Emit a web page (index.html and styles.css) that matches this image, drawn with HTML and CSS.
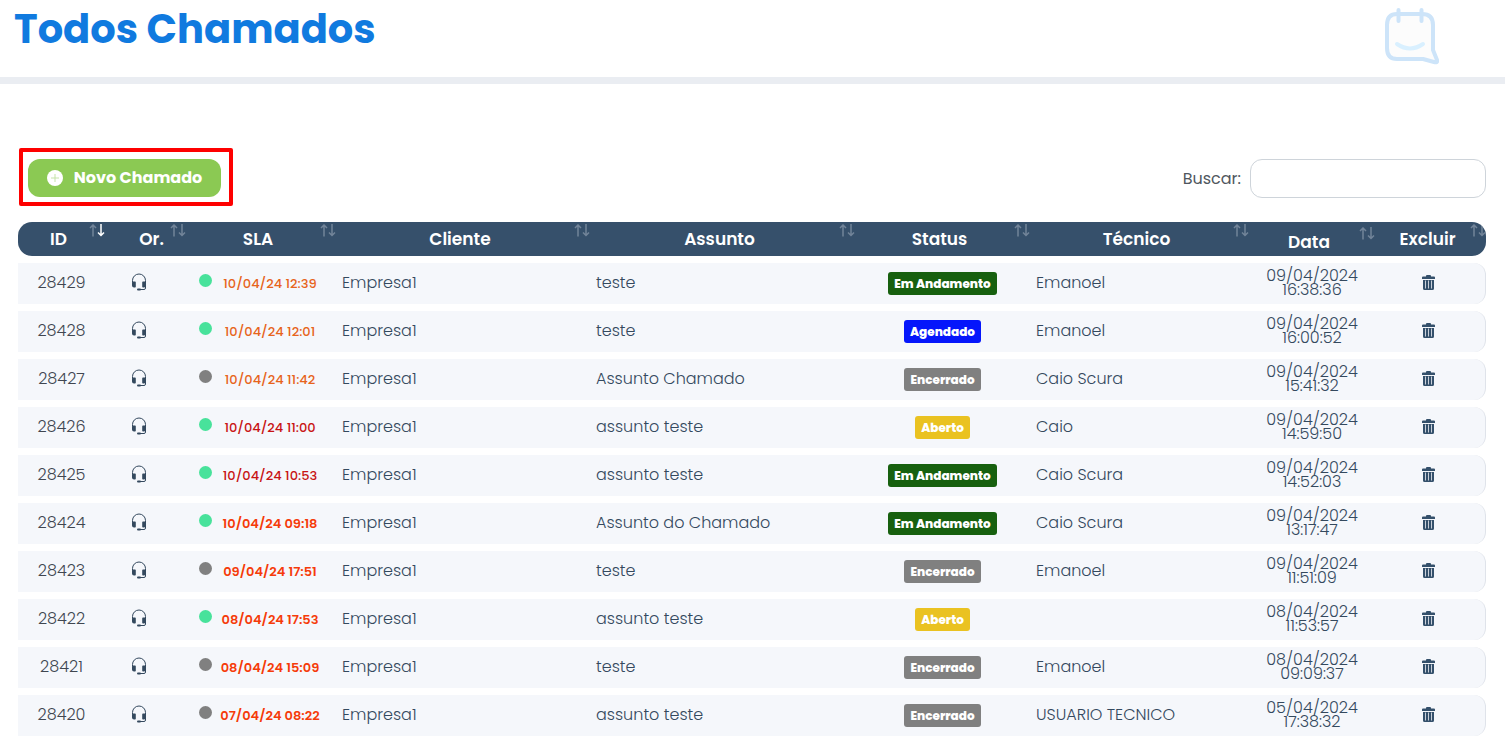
FILE: index.html
```html
<!DOCTYPE html>
<html lang="pt-BR">
<head>
<meta charset="utf-8">
<meta name="viewport" content="width=device-width, initial-scale=1">
<title>Todos Chamados</title>
<link rel="stylesheet" href="styles.css">
</head>
<body>
<svg class="sprite" aria-hidden="true">
  <symbol id="sort" viewBox="0 0 16 13">
    <g fill="none" stroke-width="1.500">
      <path class="up" d="M4 12.500V1M1 4L4 1L7 4"/>
      <path class="down" d="M12 0V11.500M9 8.500L12 11.500L15 8.500"/>
    </g>
  </symbol>
  <symbol id="headset" viewBox="0 0 16 18">
    <path d="M1.500 9V7.500a6.500 6.500 0 0 1 13 0V15q0 1.500-1.500 1.500H9" fill="none" stroke="currentColor"/>
    <path d="M1 9.500q0-.8 1-.9l2-.2q.8 0 .8.800v4.600q0 .8-.8.800l-1-.1Q1 14.300 1 12.500zM15 9.500q0-.8-1-.9l-2-.2q-.8 0-.8.800v4.600q0 .8.800.800l1-.1q2-.2 2-2z" fill="currentColor"/>
    <rect x="6" y="15.500" width="4" height="2" rx="1" fill="currentColor"/>
  </symbol>
  <symbol id="trash" viewBox="0 0 13 15">
    <path d="M4 1.500V1q0-1 1-1h3q1 0 1 1v.5h3q1 0 1 1V4H0V2.500q0-1 1-1zM1 5h11v8.500q0 1.500-1.500 1.500h-8Q1 15 1 13.500z" fill="currentColor"/>
    <path d="M3.500 5.500v8M6.500 5.500v8M9.500 5.500v8" stroke="#c9d0da"/>
  </symbol>
</svg>

<header class="page-header">
  <h1 class="page-title">Todos Chamados</h1>
  <svg class="brand" viewBox="0 0 54 57" role="img" aria-label="Agenda">
    <path d="M12 6H37Q48 6 48 17V42L52 52Q53 55 49 54L38 51H12Q2 51 2 40V17Q2 6 12 6Z" fill="#fcfcfc" stroke="#cde4f9" stroke-width="4" stroke-linejoin="round"/>
    <path d="M13.500 2V13M36.500 2V13" stroke="#cde4f9" stroke-width="4" stroke-linecap="round"/>
    <path d="M12 36Q25 45 38 36" fill="none" stroke="#d9f0ff" stroke-width="4" stroke-linecap="round"/>
  </svg>
</header>

<main class="content">
  <div class="toolbar">
    <div class="highlight">
      <button type="button" class="new-ticket">
        <svg class="plus" viewBox="0 0 16 16" aria-hidden="true"><circle cx="8" cy="8" r="8" fill="#fff"/><path d="M8 4v8M4 8h8" stroke="#c5e3a9"/></svg>
        Novo Chamado
      </button>
    </div>
    <div class="search">
      <label for="search">Buscar:</label>
      <input id="search" type="search" class="search-input">
    </div>
  </div>

  <table class="tickets">
    <colgroup>
      <col class="c-id"><col class="c-origin"><col class="c-sla"><col class="c-client"><col class="c-subject"><col class="c-status"><col class="c-tech"><col class="c-date"><col class="c-delete">
    </colgroup>
    <thead>
      <tr>
        <th class="sorted">ID<svg class="sort"><use href="#sort"/></svg></th>
        <th class="origin-head">Or.<svg class="sort"><use href="#sort"/></svg></th>
        <th>SLA<svg class="sort"><use href="#sort"/></svg></th>
        <th>Cliente<svg class="sort"><use href="#sort"/></svg></th>
        <th>Assunto<svg class="sort"><use href="#sort"/></svg></th>
        <th>Status<svg class="sort"><use href="#sort"/></svg></th>
        <th>Técnico<svg class="sort"><use href="#sort"/></svg></th>
        <th class="date-head">Data<svg class="sort"><use href="#sort"/></svg></th>
        <th>Excluir<svg class="sort"><use href="#sort"/></svg></th>
      </tr>
    </thead>
    <tbody>
      <tr>
        <td class="id">28429</td>
        <td class="origin"><svg class="headset"><use href="#headset"/></svg></td>
        <td><div class="sla"><span class="dot open"></span><span class="due ok">10/04/24 12:39</span></div></td>
        <td>Empresa1</td><td>teste</td>
        <td class="status"><span class="badge progress">Em Andamento</span></td>
        <td>Emanoel</td>
        <td class="date">09/04/2024 16:38:36</td>
        <td class="delete"><button type="button" class="remove" aria-label="Excluir 28429"><svg class="trash"><use href="#trash"/></svg></button></td>
      </tr>
      <tr>
        <td class="id">28428</td>
        <td class="origin"><svg class="headset"><use href="#headset"/></svg></td>
        <td><div class="sla"><span class="dot open"></span><span class="due ok">10/04/24 12:01</span></div></td>
        <td>Empresa1</td><td>teste</td>
        <td class="status"><span class="badge scheduled">Agendado</span></td>
        <td>Emanoel</td>
        <td class="date">09/04/2024 16:00:52</td>
        <td class="delete"><button type="button" class="remove" aria-label="Excluir 28428"><svg class="trash"><use href="#trash"/></svg></button></td>
      </tr>
      <tr>
        <td class="id">28427</td>
        <td class="origin"><svg class="headset"><use href="#headset"/></svg></td>
        <td><div class="sla"><span class="dot"></span><span class="due ok">10/04/24 11:42</span></div></td>
        <td>Empresa1</td><td>Assunto Chamado</td>
        <td class="status"><span class="badge closed">Encerrado</span></td>
        <td>Caio Scura</td>
        <td class="date">09/04/2024 15:41:32</td>
        <td class="delete"><button type="button" class="remove" aria-label="Excluir 28427"><svg class="trash"><use href="#trash"/></svg></button></td>
      </tr>
      <tr>
        <td class="id">28426</td>
        <td class="origin"><svg class="headset"><use href="#headset"/></svg></td>
        <td><div class="sla"><span class="dot open"></span><span class="due near">10/04/24 11:00</span></div></td>
        <td>Empresa1</td><td>assunto teste</td>
        <td class="status"><span class="badge pending">Aberto</span></td>
        <td>Caio</td>
        <td class="date">09/04/2024 14:59:50</td>
        <td class="delete"><button type="button" class="remove" aria-label="Excluir 28426"><svg class="trash"><use href="#trash"/></svg></button></td>
      </tr>
      <tr>
        <td class="id">28425</td>
        <td class="origin"><svg class="headset"><use href="#headset"/></svg></td>
        <td><div class="sla"><span class="dot open"></span><span class="due near">10/04/24 10:53</span></div></td>
        <td>Empresa1</td><td>assunto teste</td>
        <td class="status"><span class="badge progress">Em Andamento</span></td>
        <td>Caio Scura</td>
        <td class="date">09/04/2024 14:52:03</td>
        <td class="delete"><button type="button" class="remove" aria-label="Excluir 28425"><svg class="trash"><use href="#trash"/></svg></button></td>
      </tr>
      <tr>
        <td class="id">28424</td>
        <td class="origin"><svg class="headset"><use href="#headset"/></svg></td>
        <td><div class="sla"><span class="dot open"></span><span class="due late">10/04/24 09:18</span></div></td>
        <td>Empresa1</td><td>Assunto do Chamado</td>
        <td class="status"><span class="badge progress">Em Andamento</span></td>
        <td>Caio Scura</td>
        <td class="date">09/04/2024 13:17:47</td>
        <td class="delete"><button type="button" class="remove" aria-label="Excluir 28424"><svg class="trash"><use href="#trash"/></svg></button></td>
      </tr>
      <tr>
        <td class="id">28423</td>
        <td class="origin"><svg class="headset"><use href="#headset"/></svg></td>
        <td><div class="sla"><span class="dot"></span><span class="due late">09/04/24 17:51</span></div></td>
        <td>Empresa1</td><td>teste</td>
        <td class="status"><span class="badge closed">Encerrado</span></td>
        <td>Emanoel</td>
        <td class="date">09/04/2024 11:51:09</td>
        <td class="delete"><button type="button" class="remove" aria-label="Excluir 28423"><svg class="trash"><use href="#trash"/></svg></button></td>
      </tr>
      <tr>
        <td class="id">28422</td>
        <td class="origin"><svg class="headset"><use href="#headset"/></svg></td>
        <td><div class="sla"><span class="dot open"></span><span class="due late">08/04/24 17:53</span></div></td>
        <td>Empresa1</td><td>assunto teste</td>
        <td class="status"><span class="badge pending">Aberto</span></td>
        <td></td>
        <td class="date">08/04/2024 11:53:57</td>
        <td class="delete"><button type="button" class="remove" aria-label="Excluir 28422"><svg class="trash"><use href="#trash"/></svg></button></td>
      </tr>
      <tr>
        <td class="id">28421</td>
        <td class="origin"><svg class="headset"><use href="#headset"/></svg></td>
        <td><div class="sla"><span class="dot"></span><span class="due late">08/04/24 15:09</span></div></td>
        <td>Empresa1</td><td>teste</td>
        <td class="status"><span class="badge closed">Encerrado</span></td>
        <td>Emanoel</td>
        <td class="date">08/04/2024 09:09:37</td>
        <td class="delete"><button type="button" class="remove" aria-label="Excluir 28421"><svg class="trash"><use href="#trash"/></svg></button></td>
      </tr>
      <tr>
        <td class="id">28420</td>
        <td class="origin"><svg class="headset"><use href="#headset"/></svg></td>
        <td><div class="sla"><span class="dot"></span><span class="due late">07/04/24 08:22</span></div></td>
        <td>Empresa1</td><td>assunto teste</td>
        <td class="status"><span class="badge closed">Encerrado</span></td>
        <td>USUARIO TECNICO</td>
        <td class="date">05/04/2024 17:38:32</td>
        <td class="delete"><button type="button" class="remove" aria-label="Excluir 28420"><svg class="trash"><use href="#trash"/></svg></button></td>
      </tr>
    </tbody>
  </table>
</main>
</body>
</html>
```

FILE: styles.css
```css
* {
  box-sizing: border-box;
}

body {
  margin: 0;
  background: #fff;
  color: #34495e;
  font-family: Poppins, Inter, "Liberation Sans", sans-serif;
  font-size: 16px;
  line-height: 24px;
}

.sprite {
  display: none;
}

.page-header {
  display: flex;
  justify-content: space-between;
  align-items: flex-start;
  padding: 5px 66px 12px 14px;
  border-bottom: 7px solid #eaedf2;
}

.page-title {
  margin: 0;
  color: #107adf;
  font-size: 40px;
  font-weight: 700;
  line-height: 48px;
}

.brand {
  width: 54px;
  height: 57px;
  margin-top: 3px;
}

.content {
  padding: 64px 19px 0 18px;
}

.toolbar {
  display: flex;
  justify-content: space-between;
  align-items: center;
  padding-left: 1px;
}

.highlight {
  padding: 7px 8px 5px 5px;
  border: 4px solid #fe0000;
  border-radius: 2px;
}

.new-ticket {
  display: flex;
  align-items: center;
  justify-content: center;
  gap: 11px;
  min-width: 193px;
  height: 38px;
  padding: 0 16px;
  border: 0;
  border-radius: 12px;
  background: #8bc953;
  color: #fff;
  font: inherit;
  font-weight: 700;
}

.plus {
  width: 16px;
  height: 16px;
}

.search {
  display: flex;
  align-items: center;
  gap: 9px;
  padding-top: 3px;
  color: #50575e;
}

.search-input {
  width: 236px;
  height: 39px;
  padding: 0 12px;
  border: 1px solid #ced4da;
  border-radius: 12px;
  background: #fff;
  font: inherit;
}

.tickets {
  width: 100%;
  margin-top: 9px;
  border-collapse: separate;
  border-spacing: 0 7px;
  table-layout: fixed;
}

.c-id { width: 87px; }
.c-origin { width: 81px; }
.c-sla { width: 150px; }
.c-client { width: 254px; }
.c-subject { width: 265px; }
.c-status { width: 175px; }
.c-tech { width: 219px; }
.c-date { width: 126px; }
.c-delete { width: 111px; }

th {
  position: relative;
  height: 34px;
  padding: 0 6px 0 0;
  background: #36506b;
  color: #fff;
  font-size: 17px;
  font-weight: 600;
  text-align: center;
}

th:first-child {
  border-radius: 14px 0 0 14px;
}

th:last-child {
  border-radius: 0 14px 14px 0;
  overflow: hidden;
}

.origin-head {
  padding: 0 0 0 12px;
}

.date-head {
  padding-top: 6px;
}

.sort {
  position: absolute;
  top: 2px;
  right: 0;
  width: 16px;
  height: 13px;
  stroke: #728499;
}

.date-head .sort {
  top: 5px;
}

.sorted .sort {
  --down: #fff;
}

.down {
  stroke: var(--down, #728499);
}

td {
  height: 41px;
  padding: 0 6px 2px;
  background: #f5f7fb;
  font-weight: 300;
  white-space: nowrap;
}

td:last-child {
  border-right: 1px solid #dfe3ea;
  border-radius: 0 12px 12px 0;
}

.id,
.status,
.date,
.delete {
  text-align: center;
}

.id {
  color: #404650;
}

.origin {
  padding: 0 20px 4px 6px;
  text-align: center;
}

.date {
  line-height: 14px;
  padding: 0 15px 2px;
  white-space: normal;
}

.headset {
  display: inline-block;
  width: 16px;
  height: 18px;
  vertical-align: middle;
}

.sla {
  display: flex;
  align-items: center;
  gap: 5px;
  padding: 0 7px;
}

.dot {
  flex: none;
  width: 13px;
  height: 13px;
  margin-bottom: 4px;
  border-radius: 50%;
  background: #808080;
}

.open {
  background: #48e29b;
}

.due {
  flex: 1;
  padding-top: 2px;
  font-size: 13px;
  font-weight: 500;
  text-align: center;
}

.ok {
  color: #e7641c;
}

.near {
  color: #c81414;
}

.late {
  color: #f53b0a;
  font-weight: 600;
}

.badge {
  display: inline-block;
  padding: 0 6px;
  border-radius: 3px;
  color: #fff;
  font-size: 12px;
  font-weight: 800;
  line-height: 23px;
  vertical-align: middle;
}

.progress { background: #17600f; }
.scheduled { background: #0516fb; }
.closed { background: #808080; }
.pending { background: #eac221; }

.delete {
  padding: 0 9px 4px 6px;
}

.remove {
  padding: 0;
  border: 0;
  background: none;
  color: #34506b;
  line-height: 0;
  vertical-align: middle;
}

.trash {
  width: 13px;
  height: 15px;
}
```
